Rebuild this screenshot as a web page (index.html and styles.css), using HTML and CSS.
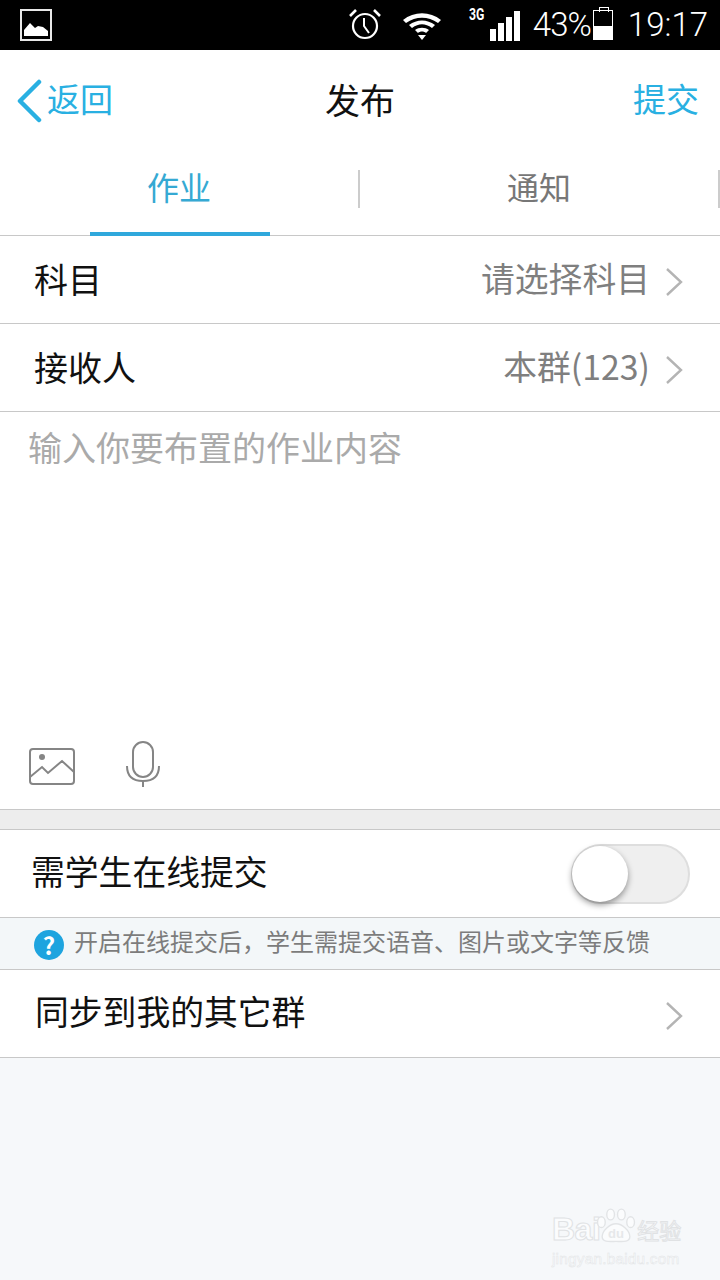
FILE: index.html
```html
<!DOCTYPE html>
<html lang="zh-CN">
<head>
  <meta charset="UTF-8" />
  <title>发布</title>
  <link rel="stylesheet" href="styles.css">
</head>
<body>
  <div class="screen">
    <div class="status-bar">
      <svg class="status-pic" width="32" height="32" viewBox="0 0 32 32">
        <rect x="1" y="1" width="30" height="30" fill="#000" stroke="#e8e8e8" stroke-width="2"/>
        <path d="M4 27V21L10 14L15 19L18 17L23 18L28 22V27Z" fill="#fff"/>
      </svg>
      <div class="status-right">
        <svg class="status-alarm" width="34" height="32" viewBox="0 0 34 32" fill="none" stroke="#fff">
          <circle cx="17" cy="18" r="12" stroke-width="2.2"/>
          <path d="M16 10V18L21 25" stroke-width="2"/>
          <path d="M2 8L8 2M32 8L26 2" stroke-width="2.6"/>
        </svg>
        <svg class="status-wifi" width="38" height="27" viewBox="0 0 38 27" fill="#fff">
          <path d="M0 7C11-2 27-2 38 7L35 10C25 3 13 3 3 10Z"/>
          <path d="M6 12C14 6 24 6 32 12L29 15C22 10 16 10 9 15Z"/>
          <path d="M12 17C16 14 22 14 26 17L23 20C21 18 17 18 15 20Z"/>
          <path d="M15 22H23L19 27Z"/>
        </svg>
        <div class="status-signal">
          <span class="status-3g">3G</span>
          <div class="signal-bars"><i class="bar-1"></i><i class="bar-2"></i><i class="bar-3"></i><i class="bar-4"></i></div>
        </div>
        <span class="status-text status-pct">43%</span>
        <div class="battery"><div class="battery-fill"></div></div>
        <span class="status-text status-time">19:17</span>
      </div>
    </div>

    <div class="nav-bar">
      <div class="nav-back">
        <svg width="26" height="44" viewBox="0 0 26 44" fill="none" stroke="#29b0e2" stroke-width="4.5" stroke-linecap="round" stroke-linejoin="round">
          <path d="M23 3L4 22L23 41"/>
        </svg>
        <span>返回</span>
      </div>
      <div class="nav-title">发布</div>
      <div class="nav-submit">提交</div>
    </div>

    <div class="tabs">
      <div class="tab tab-active"><span>作业</span></div>
      <div class="tab"><span>通知</span></div>
    </div>

    <div class="row">
      <span class="row-label">科目</span>
      <span class="row-value">请选择科目</span>
      <svg class="chev" width="18" height="30" viewBox="0 0 18 30" fill="none" stroke="#b4b4b4" stroke-width="2.4"><path d="M2 2L16 15L2 28"/></svg>
    </div>
    <div class="row">
      <span class="row-label">接收人</span>
      <span class="row-value">本群(123)</span>
      <svg class="chev" width="18" height="30" viewBox="0 0 18 30" fill="none" stroke="#b4b4b4" stroke-width="2.4"><path d="M2 2L16 15L2 28"/></svg>
    </div>

    <div class="editor">
      <div class="placeholder">输入你要布置的作业内容</div>
      <div class="editor-tools">
        <svg width="48" height="40" viewBox="0 0 48 40" fill="none" stroke="#858585" stroke-width="2">
          <rect x="2" y="2" width="44" height="35" rx="3"/>
          <path d="M2 30L14 20L20 26L34 14L46 25"/>
          <circle cx="14" cy="10" r="3" fill="#858585" stroke="none"/>
        </svg>
        <svg width="34" height="46" viewBox="0 0 34 46" fill="none" stroke="#858585" stroke-width="2">
          <rect x="7" y="1" width="20" height="35" rx="10"/>
          <path d="M1 25C1 35 7 40 17 40C27 40 33 35 33 25M17 40V46"/>
        </svg>
      </div>
    </div>

    <div class="band"></div>

    <div class="row row-toggle">
      <span class="row-label row-label-wide">需学生在线提交</span>
      <div class="toggle"><div class="toggle-knob"></div></div>
    </div>

    <div class="help">
      <span class="help-icon">?</span>
      <span class="help-text">开启在线提交后<span class="help-comma">，</span>学生需提交语音、图片或文字等反馈</span>
    </div>

    <div class="row">
      <span class="row-label row-label-sync">同步到我的其它群</span>
      <svg class="chev" width="18" height="30" viewBox="0 0 18 30" fill="none" stroke="#b4b4b4" stroke-width="2.4"><path d="M2 2L16 15L2 28"/></svg>
    </div>

    <div class="footer-fill"></div>

    <div class="watermark">
      <div class="wm-logo">
        <span class="wm-bai">Bai</span>
        <svg width="40" height="44" viewBox="0 0 52 46" fill="#fbfcfd" stroke="#e2e4e6" stroke-width="1.8">
          <ellipse cx="7" cy="18" rx="5" ry="7"/>
          <ellipse cx="19" cy="8" rx="5" ry="7"/>
          <ellipse cx="33" cy="8" rx="5" ry="7"/>
          <ellipse cx="45" cy="18" rx="5" ry="7"/>
          <path d="M26 20C34 20 44 29 44 37C44 45 32 43 26 43C20 43 8 45 8 37C8 29 18 20 26 20Z"/>
          <text class="wm-du" x="26" y="39" text-anchor="middle">du</text>
        </svg>
        <span class="wm-jy">经验</span>
      </div>
      <div class="wm-url">jingyan.baidu.com</div>
    </div>
  </div>
</body>
</html>
```

FILE: styles.css
```css
* {
  box-sizing: border-box;
}
body {
  margin: 0;
  background: #f6f8fa;
  font-family: "Noto Sans CJK SC", "Noto Sans", sans-serif;
  color: #111;
}
.screen {
  width: 720px;
  height: 1280px;
  position: relative;
  overflow: hidden;
  display: flex;
  flex-direction: column;
}

/* status bar */
.status-bar {
  height: 50px;
  background: #000;
  color: #fff;
  display: flex;
  align-items: center;
  justify-content: space-between;
  padding: 0 12px 0 20px;
  flex-shrink: 0;
}
.status-right {
  display: flex;
  align-items: center;
}
.status-alarm {
  margin-right: 21px;
  margin-top: -2px;
}
.status-wifi {
  margin-right: 27px;
  margin-top: 2px;
}
.status-signal {
  display: flex;
  align-items: flex-end;
  margin-right: 13px;
  height: 32px;
}
.status-3g {
  font-family: "Roboto", sans-serif;
  font-size: 17px;
  font-weight: 700;
  line-height: 16px;
  align-self: flex-start;
  transform: scaleX(0.72);
  margin: -3px 2px 0 -2px;
}
.signal-bars {
  display: flex;
  align-items: flex-end;
  gap: 2px;
}
.signal-bars i {
  display: block;
  width: 6px;
  background: #fff;
}
.bar-1 { height: 12px; }
.bar-2 { height: 18px; }
.bar-3 { height: 24px; }
.bar-4 { height: 30px; }
.status-text {
  font-family: "Roboto", sans-serif;
  font-weight: 300;
  font-size: 33px;
  line-height: 40px;
}
.status-pct {
  letter-spacing: -1px;
}
.battery {
  width: 20px;
  height: 30px;
  margin: 0 15px 0 2px;
  border: 1px solid #fff;
  display: flex;
  align-items: flex-end;
  position: relative;
}
.battery::before {
  content: "";
  position: absolute;
  top: -4px;
  left: 5px;
  width: 8px;
  height: 4px;
  border: 1px solid #fff;
  border-bottom: none;
}
.battery-fill {
  width: 100%;
  height: 13px;
  background: #fff;
}

/* nav */
.nav-bar {
  height: 96px;
  background: #fff;
  display: flex;
  align-items: center;
  justify-content: space-between;
  padding: 0 21px 0 16px;
  position: relative;
  flex-shrink: 0;
}
.nav-back {
  display: flex;
  align-items: center;
  gap: 5px;
  color: #29b0e2;
  font-size: 33px;
}
.nav-back svg {
  margin-top: 6px;
}
.nav-title {
  position: absolute;
  left: 0;
  right: 0;
  text-align: center;
  font-size: 35px;
  color: #111;
}
.nav-submit {
  color: #29b0e2;
  font-size: 33px;
}

/* tabs */
.tabs {
  height: 90px;
  background: #fff;
  border-bottom: 1px solid #c8c8c8;
  display: flex;
  flex-shrink: 0;
}
.tab {
  width: 360px;
  height: 90px;
  padding-right: 2px;
  font-size: 32px;
  color: #777;
  text-align: center;
  line-height: 80px;
  position: relative;
}
.tab::after {
  content: "";
  position: absolute;
  right: 0;
  top: 24px;
  width: 2px;
  height: 38px;
  background: #ccc;
}
.tab-active {
  color: #35a9d3;
}
.tab-active::before {
  content: "";
  position: absolute;
  left: 90px;
  bottom: 0;
  width: 180px;
  height: 4px;
  background: #2fa8dc;
}

/* rows */
.row {
  height: 88px;
  background: #fff;
  border-bottom: 1px solid #c8c8c8;
  display: flex;
  align-items: center;
  padding: 0 37px 0 34px;
  flex-shrink: 0;
}
.row-label {
  font-size: 34px;
  flex: 1;
  color: #111;
  padding-bottom: 2px;
}
.row-label-wide {
  font-size: 33.8px;
  margin-left: -3px;
  padding-bottom: 6px;
}
.row-label-sync {
  font-size: 33.8px;
  margin-left: 1px;
  padding-bottom: 6px;
}
.row-value {
  font-size: 33.8px;
  color: #7f7f7f;
  margin-right: 15px;
  padding-bottom: 5px;
}
.chev {
  flex-shrink: 0;
  margin-top: 4px;
}

/* editor */
.editor {
  height: 398px;
  background: #fff;
  border-bottom: 1px solid #c8c8c8;
  display: flex;
  flex-direction: column;
  justify-content: space-between;
  padding: 10px 28px 22px;
  flex-shrink: 0;
}
.placeholder {
  font-size: 34px;
  color: #aaa;
  line-height: 50px;
}
.editor-tools {
  display: flex;
  align-items: flex-end;
  gap: 50px;
}

.band {
  height: 20px;
  background: #ededed;
  border-bottom: 1px solid #c8c8c8;
  flex-shrink: 0;
}

/* toggle */
.toggle {
  width: 119px;
  height: 60px;
  border-radius: 30px;
  background: #efefef;
  border: 2px solid #dedede;
  position: relative;
  margin-right: -7px;
}
.toggle-knob {
  position: absolute;
  left: -1px;
  top: 0;
  width: 56px;
  height: 56px;
  border-radius: 50%;
  background: #fff;
  box-shadow: 0 3px 6px rgba(0, 0, 0, 0.4);
}

/* help line */
.help {
  height: 52px;
  background: #f3f7f9;
  border-bottom: 1px solid #c8c8c8;
  display: flex;
  align-items: center;
  gap: 10px;
  padding: 0 0 0 34px;
  font-size: 24px;
  color: #7c7c7c;
  flex-shrink: 0;
}
.help-text {
  padding-bottom: 6px;
}
.help-comma {
  font-family: "Noto Sans CJK TC", sans-serif;
}
.help-icon {
  width: 30px;
  height: 30px;
  border-radius: 50%;
  background: #1ea4df;
  color: #fff;
  font-size: 24px;
  font-weight: 700;
  line-height: 30px;
  text-align: center;
  flex-shrink: 0;
  margin-top: 2px;
}

.footer-fill {
  flex: 1;
  background: #f6f8fa;
}

/* watermark */
.watermark {
  position: absolute;
  left: 552px;
  top: 1200px;
  width: 130px;
  color: #fbfcfd;
  -webkit-text-stroke: 1px #e0e2e4;
}
.wm-logo {
  display: flex;
  align-items: flex-end;
  font-family: "Liberation Sans", sans-serif;
  font-size: 32px;
  font-weight: 700;
  line-height: 38px;
  height: 48px;
}
.wm-bai {
  letter-spacing: -0.5px;
}
.wm-logo svg {
  margin: 0 0 0 -4px;
  flex-shrink: 0;
}
.wm-du {
  font-family: "Liberation Sans", sans-serif;
  font-size: 17px;
  font-weight: 700;
  -webkit-text-stroke: 0;
  fill: #e6e8ea;
  stroke: none;
}
.wm-jy {
  font-family: "Noto Sans CJK SC", sans-serif;
  font-size: 22px;
  font-weight: 400;
  margin-left: 1px;
  white-space: nowrap;
}
.wm-url {
  font-family: "Liberation Sans", sans-serif;
  font-size: 15.4px;
  line-height: 20px;
  letter-spacing: 0.2px;
  margin-top: 1px;
  white-space: nowrap;
  -webkit-text-stroke: 0.5px #e2e4e6;
}
```
